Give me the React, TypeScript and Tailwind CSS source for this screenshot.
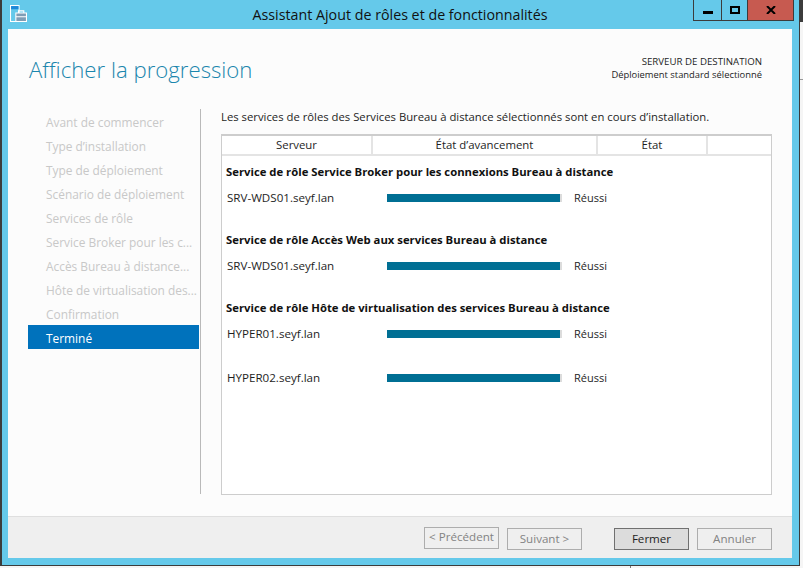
const steps = [
  'Avant de commencer',
  'Type d’installation',
  'Type de déploiement',
  'Scénario de déploiement',
  'Services de rôle',
  'Service Broker pour les c...',
  'Accès Bureau à distance...',
  'Hôte de virtualisation des...',
  'Confirmation',
]

const groups = [
  { title: 'Service de rôle Service Broker pour les connexions Bureau à distance', servers: ['SRV-WDS01.seyf.lan'] },
  { title: 'Service de rôle Accès Web aux services Bureau à distance', servers: ['SRV-WDS01.seyf.lan'] },
  { title: 'Service de rôle Hôte de virtualisation des services Bureau à distance', servers: ['HYPER01.seyf.lan', 'HYPER02.seyf.lan'] },
]

function ServerRow({ name }: { name: string }) {
  return (
    <div className="flex h-[22px] items-center text-[#1e1e1e]">
      <span className="ml-[5px] w-[160px] text-[11.6px]">{name}</span>
      <div className="h-[8px] w-[175px] bg-[#dcdcdc]">
        <div className="h-full w-[173px] bg-[#006f94]" />
      </div>
      <span className="ml-[12px] text-[11px]">Réussi</span>
    </div>
  )
}

function NavButton({ label, primary }: { label: string; primary?: boolean }) {
  return (
    <button
      className={`h-[22px] w-[75px] border pb-[2px] text-[11.6px] ${
        primary ? 'border-[#707070] bg-[#dcdcdc] text-[#1e1e1e]' : 'border-[#adadad] bg-[#efefef] text-[#838383]'
      }`}
    >
      {label}
    </button>
  )
}

export default function App() {
  return (
    <div className="flex h-[568px] w-[803px] flex-col overflow-hidden bg-[#f5f5f5] font-['Open_Sans','Noto_Sans',sans-serif]">
      <div className="flex h-[566px] shrink-0">
        <div className="flex w-[800px] shrink-0 flex-col border-r border-b border-l-2 border-[#3c3c3c] bg-[#65c9ea] pr-[7px] pb-[7px] pl-[6px]">
          <div className="relative flex h-[29px] shrink-0 items-center justify-center">
            <svg viewBox="0 0 16 16" className="absolute top-[5px] left-[2px] h-[17px] w-[17px]">
              <path d="M.5.5h8v15h-8z" fill="#65c9ea" stroke="#fff" />
              <path d="M1 1h7v3H1z" fill="#1e88d8" />
              <path d="M5.5 7.5h10v8h-10z" fill="#7f9db5" stroke="#fff" />
              <path d="M8 7.5V5.5h5v2M5.5 11h10" fill="none" stroke="#fff" />
            </svg>
            <span className="text-[14.25px] text-[#111]">Assistant Ajout de rôles et de fonctionnalités</span>
            <div className="absolute top-0 right-[-2px] flex h-[21px] border-x border-b border-[#3c3c3c]">
              <div className="flex w-[28px] items-center justify-center border-r border-[#3c3c3c]">
                <div className="mt-[5px] h-[3px] w-[10px] bg-black" />
              </div>
              <div className="flex w-[26px] items-center justify-center border-r border-[#3c3c3c]">
                <div className="h-[8px] w-[10px] border-2 border-black" />
              </div>
              <div className="flex w-[45px] items-center justify-center bg-[#c75a50]">
                <svg viewBox="0 0 10 8" className="h-[8px] w-[10px]">
                  <path d="M1 0l8 8M9 0L1 8" stroke="#000" strokeWidth="2" />
                </svg>
              </div>
            </div>
          </div>

          <div className="flex min-h-0 flex-1 flex-col bg-[#fcfcfc]">
            <div className="flex h-[80px] shrink-0 justify-between pt-[26px] pr-[30px] pl-[21px]">
              <h1 className="text-[22.2px] leading-[30px] font-light text-[#1b86ad]">Afficher la progression</h1>
              <div className="text-right leading-[13px] text-[#1e1e1e]">
                <p className="text-[9.7px]">SERVEUR DE DESTINATION</p>
                <p className="text-[9.4px]">Déploiement standard sélectionné</p>
              </div>
            </div>

            <div className="flex min-h-0 flex-1">
              <nav className="mr-[1px] ml-[20px] w-[171px] shrink-0">
                {steps.map((step) => (
                  <div key={step} className="flex h-[24px] items-center pt-[3px] pl-[18px] text-[11.9px] text-[#c8c8c8]">
                    {step}
                  </div>
                ))}
                <div className="flex h-[24px] items-center bg-[#0072bc] pt-[3px] pl-[18px] text-[11.9px] text-white">Terminé</div>
              </nav>
              <div className="h-[385px] w-px bg-[#b9b9b9]" />
              <div className="ml-[20px] flex w-[551px] flex-col">
                <p className="h-[25px] text-[11.3px] leading-[16px] text-[#1e1e1e]">
                  Les services de rôles des Services Bureau à distance sélectionnés sont en cours d’installation.
                </p>
                <div className="h-[361px] border border-t-2 border-[#cdcdcd] bg-white">
                  <div className="flex h-[20px] border-b-2 border-[#e4e4e4] text-[11.4px] text-[#1e1e1e]">
                    <div className="flex w-[151px] items-center justify-center border-r-2 border-[#e4e4e4]">Serveur</div>
                    <div className="flex w-[225px] items-center justify-center border-r-2 border-[#e4e4e4]">État d’avancement</div>
                    <div className="flex w-[110px] items-center justify-center border-r-2 border-[#e4e4e4]">État</div>
                  </div>
                  <div className="flex flex-col gap-[21px] pt-[6px]">
                    {groups.map((group) => (
                      <div key={group.title}>
                        <div className="flex h-[20px] items-center pl-[4px] text-[11.3px] font-bold text-[#111]">{group.title}</div>
                        <div className="mt-[5px] flex flex-col gap-[22px]">
                          {group.servers.map((server) => (
                            <ServerRow key={server} name={server} />
                          ))}
                        </div>
                      </div>
                    ))}
                  </div>
                </div>
              </div>
            </div>

            <div className="mt-auto flex h-[42px] shrink-0 items-center border-t border-[#dfdfdf] bg-[#efefef] pr-[20px] pl-[416px]">
              <NavButton label="< Précédent" />
              <div className="ml-[8px]">
                <NavButton label="Suivant >" />
              </div>
              <div className="ml-[32px]">
                <NavButton label="Fermer" primary />
              </div>
              <div className="ml-[8px]">
                <NavButton label="Annuler" />
              </div>
            </div>
          </div>
        </div>

        {/* bout de bureau visible derriere la fenetre */}
        <div className="flex w-[3px] shrink-0 flex-col">
          <div className="h-[22px] bg-[#3c3c3c]" />
          <div className="mt-[57px] h-px bg-[#999999]" />
        </div>
      </div>
      <div className="ml-[630px] h-[2px] w-px bg-[#777777]" />
    </div>
  )
}
